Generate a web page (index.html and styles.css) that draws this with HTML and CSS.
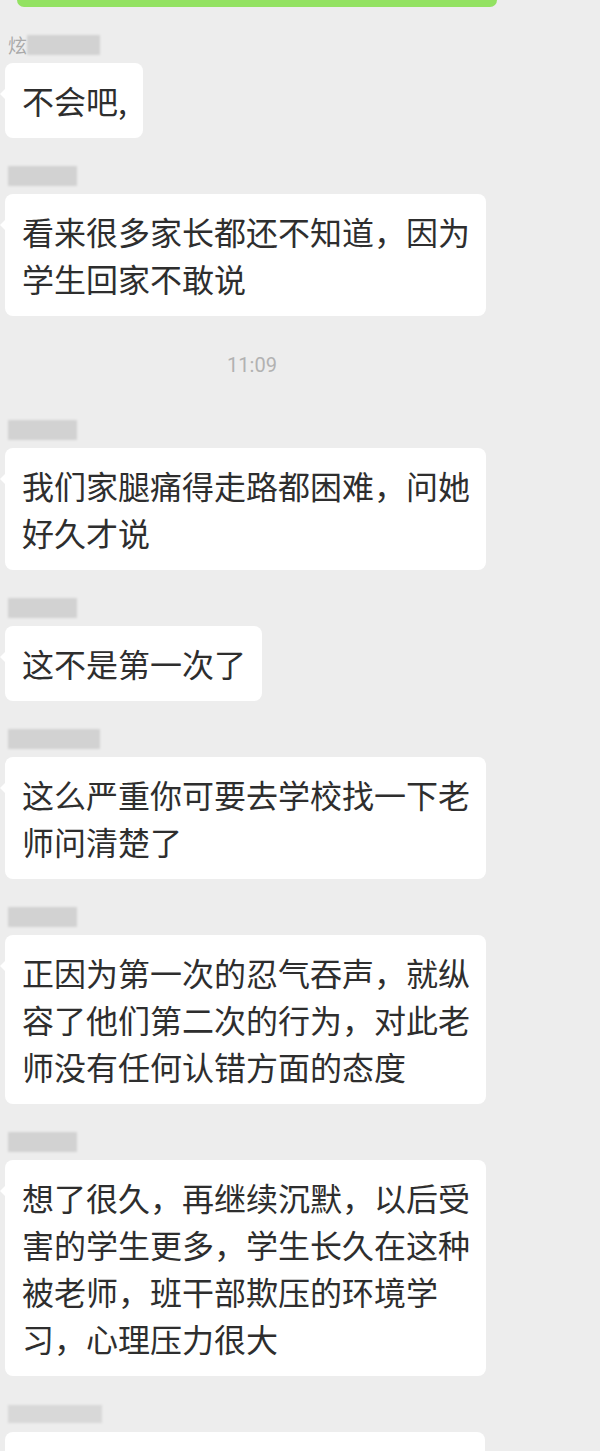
FILE: index.html
```html
<!DOCTYPE html>
<html lang="zh-CN">
<head>
<meta charset="utf-8">
<title>群聊</title>
<link rel="stylesheet" href="styles.css">
</head>
<body>
<div class="chat">
  <div class="sent-tail"></div>

  <div class="msg">
    <div class="name"><span class="name-char">炫</span><span class="blur w73"></span></div>
    <div class="bubble">不会吧,</div>
  </div>

  <div class="msg">
    <div class="name"><span class="blur w69"></span></div>
    <div class="bubble">看来很多家长都还不知道，因为<br>学生回家不敢说</div>
  </div>

  <div class="time">11:09</div>

  <div class="msg">
    <div class="name"><span class="blur w69"></span></div>
    <div class="bubble">我们家腿痛得走路都困难，问她<br>好久才说</div>
  </div>

  <div class="msg">
    <div class="name"><span class="blur w69"></span></div>
    <div class="bubble">这不是第一次了</div>
  </div>

  <div class="msg">
    <div class="name"><span class="blur w92"></span></div>
    <div class="bubble">这么严重你可要去学校找一下老<br>师问清楚了</div>
  </div>

  <div class="msg">
    <div class="name"><span class="blur w69"></span></div>
    <div class="bubble">正因为第一次的忍气吞声，就纵<br>容了他们第二次的行为，对此老<br>师没有任何认错方面的态度</div>
  </div>

  <div class="msg">
    <div class="name"><span class="blur w69"></span></div>
    <div class="bubble">想了很久，再继续沉默，以后受<br>害的学生更多，学生长久在这种<br>被老师，班干部欺压的环境学<br>习，心理压力很大</div>
  </div>

  <div class="msg">
    <div class="name"><span class="blur w94 light"></span></div>
    <div class="bubble wide">&nbsp;</div>
  </div>
</div>
</body>
</html>
```

FILE: styles.css
```css
html, body {
  margin: 0;
  padding: 0;
  background: #ededed;
}

body {
  width: 600px;
  height: 1451px;
  overflow: hidden;
  font-family: "Noto Sans CJK SC", "Noto Sans", sans-serif;
}

.chat {
  display: flex;
  flex-direction: column;
  align-items: flex-start;
  padding-left: 5px;
}

.sent-tail {
  margin-left: 12px;
  width: 480px;
  height: 7px;
  background: #93e262;
  border-radius: 0 0 8px 8px;
}

.msg {
  padding-top: 28px;
  display: flex;
  flex-direction: column;
  align-items: flex-start;
}

.name {
  height: 20px;
  margin-bottom: 8px;
  margin-left: 3px;
  display: flex;
  align-items: center;
}

.name-char {
  font-size: 19px;
  line-height: 20px;
  color: #a9a9a9;
  width: 19px;
}

.blur {
  display: block;
  height: 20px;
  background: #d2d2d2;
  filter: blur(1px);
  border-radius: 1px;
}

.blur.light {
  background: #d8d8d8;
  height: 18px;
}

.w69 { width: 69px; }
.w73 { width: 73px; }
.w92 { width: 92px; }
.w94 { width: 94px; }

.bubble {
  position: relative;
  background: #ffffff;
  border-radius: 8px;
  padding: 14px 16px 14px 17px;
  font-size: 32px;
  line-height: 47px;
  color: #2e2e2e;
  white-space: nowrap;
}

.bubble.wide {
  width: 447px;
}

.bubble::before {
  content: "";
  position: absolute;
  left: -5px;
  top: 26px;
  border-style: solid;
  border-width: 5px 5px 5px 0;
  border-color: transparent #ffffff transparent transparent;
}

.time {
  width: 494px;
  margin-top: 36px;
  margin-bottom: 14px;
  height: 26px;
  line-height: 26px;
  text-align: center;
  font-family: Roboto, "Noto Sans", sans-serif;
  font-size: 20px;
  color: #b2b2b2;
}
```
